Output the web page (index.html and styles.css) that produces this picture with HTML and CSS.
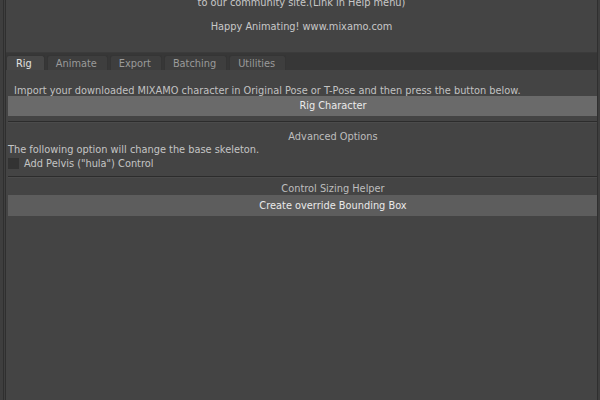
FILE: index.html
```html
<!DOCTYPE html>
<html>
<head>
<meta charset="utf-8">
<link rel="stylesheet" href="styles.css">
</head>
<body>
<div class="window">
  <div class="edge-left"></div>
  <div class="main">
    <div class="intro">
      <div class="line">to our community site.(Link in Help menu)</div>
      <div class="line"></div>
      <div class="line">Happy Animating! www.mixamo.com</div>
    </div>
    <div class="tabbar">
      <div class="tab active">Rig</div>
      <div class="tab">Animate</div>
      <div class="tab">Export</div>
      <div class="tab">Batching</div>
      <div class="tab">Utilities</div>
    </div>
    <div class="content">
      <div class="note">Import your downloaded MIXAMO character in Original Pose or T-Pose and then press the button below.</div>
      <div class="wide">
        <div class="btn light">Rig Character</div>
      </div>
      <div class="sep"></div>
      <div class="wide"><div class="header">Advanced Options</div></div>
      <div class="label">The following option will change the base skeleton.</div>
      <div class="check-row"><span class="box"></span><span class="label">Add Pelvis ("hula") Control</span></div>
      <div class="sep sep2"></div>
      <div class="wide">
        <div class="header header2">Control Sizing Helper</div>
        <div class="btn">Create override Bounding Box</div>
      </div>
    </div>
  </div>
  <div class="edge-right"></div>
</div>
</body>
</html>
```
FILE: styles.css
```css
html, body {
  margin: 0;
  padding: 0;
  background: #444444;
}
body {
  font-family: "DejaVu Sans", sans-serif;
  font-size: 9.8px;
  color: #c2c2c2;
}
.window {
  display: flex;
  height: 400px;
  width: 600px;
  overflow: hidden;
}
.edge-left {
  width: 6px;
  flex: none;
  background: linear-gradient(to right, #3e3e3e 0 3px, #2f2f2f 3px 4px, #3f3f3f 4px 5px, #2f2f2f 5px 6px);
}
.edge-right {
  width: 3px;
  flex: none;
  background: linear-gradient(to right, #2f2f2f 0 1px, #3e3e3e 1px 3px);
}
.main {
  flex: 1;
  overflow: hidden;
  min-width: 0;
}
.intro {
  margin-top: -3px;
  text-align: center;
  color: #c8c8c8;
}
.intro .line {
  height: 12px;
  line-height: 12px;
}
.tabbar {
  margin-top: 19px;
  height: 18px;
  box-sizing: border-box;
  background: #373737;
  border-top: 1px solid #3b3b3b;
  padding-top: 2px;
  display: flex;
  gap: 2px;
}
.tab {
  height: 15px;
  line-height: 15px;
  box-sizing: border-box;
  padding: 0 10px 0 8px;
  background: #3e3e3e;
  color: #9a9a9a;
  border-radius: 3px 3px 0 0;
  border: 1px solid #353535;
  border-bottom: none;
}
.tab.active {
  background: #474747;
  color: #e2e2e2;
  padding: 0 12px 0 9px;
}
.content {
  padding-top: 15px;
}
.note {
  padding-left: 8px;
  height: 11px;
  line-height: 11px;
  white-space: nowrap;
}
.wide {
  width: 650px;
  margin-left: 2px;
}
.btn {
  height: 21px;
  line-height: 21px;
  text-align: center;
  color: #eaeaea;
  background: #5d5d5d;
}
.btn.light {
  height: 20px;
  line-height: 20px;
  background: #6a6a6a;
}
.sep {
  margin: 5px 0 0 2px;
  height: 1px;
  background: #2c2c2c;
  border-bottom: 1px solid #4b4b4b;
}
.sep.sep2 {
  margin-top: 6px;
}
.header {
  text-align: center;
  height: 12px;
  line-height: 12px;
  padding-top: 8px;
  color: #bebebe;
}
.header.header2 {
  padding-top: 5px;
}
.label {
  color: #c4c4c4;
  line-height: 12px;
  padding-left: 2px;
}
.wide + .label {
  padding-top: 1px;
}
.check-row {
  display: flex;
  align-items: center;
  height: 13px;
  margin-top: 1px;
  padding-left: 2px;
}
.check-row .box {
  width: 11px;
  height: 11px;
  background: #333333;
  flex: none;
}
.check-row .label {
  padding-left: 5px;
}
```
